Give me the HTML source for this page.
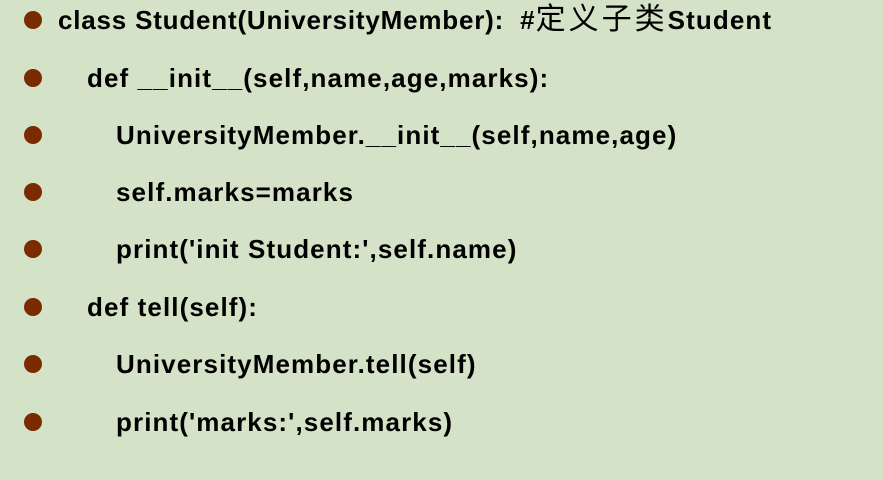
<!DOCTYPE html>
<html><head><meta charset="utf-8"><style>
html,body{margin:0;padding:0}
body{width:883px;height:480px;background:#d4e2c7;position:relative;overflow:hidden;font-family:"Liberation Sans","Noto Sans CJK SC",sans-serif;}
.l{position:absolute;height:30px;line-height:30px;font-weight:bold;font-size:26px;letter-spacing:1.1px;color:#000;white-space:pre}
.b{position:absolute;left:24px;width:18px;height:18px;border-radius:50%;background:#7b2b02}
.c{font-weight:normal;letter-spacing:3px;font-family:"Noto Sans CJK SC",sans-serif;font-size:30px;line-height:20px}
</style></head><body>
<div class="b" style="top:11px"></div><div class="l" style="left:58px;top:5px"><span style="letter-spacing:0.8px">class Student(UniversityMember):  </span>#<span class="c">定义子类</span>Student</div>
<div class="b" style="top:69px"></div><div class="l" style="left:87px;top:63px">def __init__(self,name,age,marks):</div>
<div class="b" style="top:126px"></div><div class="l" style="left:116px;top:120px">UniversityMember.__init__(self,name,age)</div>
<div class="b" style="top:183px"></div><div class="l" style="left:116px;top:177px">self.marks=marks</div>
<div class="b" style="top:240px"></div><div class="l" style="left:116px;top:234px">print('init Student:',self.name)</div>
<div class="b" style="top:298px"></div><div class="l" style="left:87px;top:292px">def tell(self):</div>
<div class="b" style="top:355px"></div><div class="l" style="left:116px;top:349px">UniversityMember.tell(self)</div>
<div class="b" style="top:413px"></div><div class="l" style="left:116px;top:407px">print('marks:',self.marks)</div>
</body></html>
